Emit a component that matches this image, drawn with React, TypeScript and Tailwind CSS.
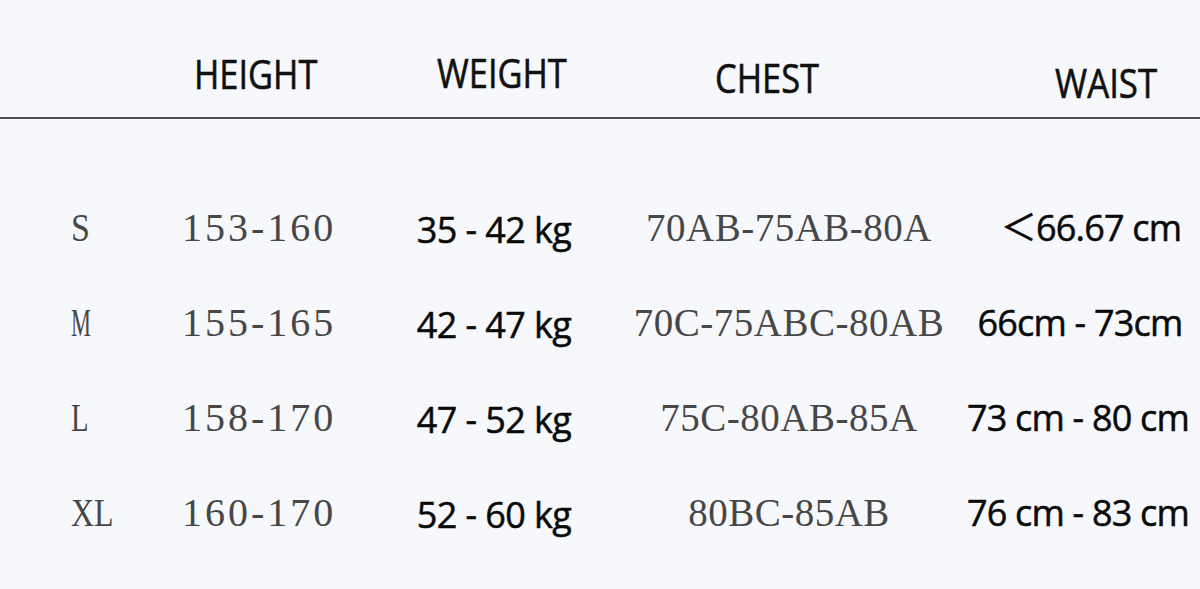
import React from "react";

const sans = { fontFamily: '"Open Sans", "Noto Sans", "Noto Sans CJK SC", sans-serif' };
const serif = { fontFamily: '"Liberation Serif", "DejaVu Serif", serif' };

const rows = [
  { size: "S", sizeCls: "scale-x-[0.85]", height: "153-160", weight: "35 - 42 kg", chest: "70AB-75AB-80A", waist: "＜66.67 cm", shift: "pl-[26px]" },
  { size: "M", sizeCls: "scale-x-[0.56]", height: "155-165", weight: "42 - 47 kg", chest: "70C-75ABC-80AB", waist: "66cm - 73cm", shift: "pl-[4px]" },
  { size: "L", sizeCls: "scale-x-[0.72]", height: "158-170", weight: "47 - 52 kg", chest: "75C-80AB-85A", waist: "73 cm - 80 cm", shift: "pl-[0px]" },
  { size: "XL", sizeCls: "scale-x-[0.8]", height: "160-170", weight: "52 - 60 kg", chest: "80BC-85AB", waist: "76 cm - 83 cm", shift: "pl-[0px]" },
];

export default function App() {
  return (
    <div className="w-[1200px] h-[589px] bg-[#f7f8fc] overflow-hidden">
      <div className="flex h-[119px] border-b-2 border-[#505050] text-[40px] leading-[40px] text-[#111] [-webkit-text-stroke:0.6px_#111]" style={sans}>
        <div className="w-[194px] shrink-0" />
        <div className="w-[243px] shrink-0 pt-[54px]">
          <span className="inline-block origin-left scale-x-[0.86]">HEIGHT</span>
        </div>
        <div className="w-[278px] shrink-0 pt-[53px]">
          <span className="inline-block origin-left scale-x-[0.86]">WEIGHT</span>
        </div>
        <div className="w-[340px] shrink-0 pt-[58px]">
          <span className="inline-block origin-left scale-x-[0.86]">CHEST</span>
        </div>
        <div className="flex-1 pt-[63px]">
          <span className="inline-block origin-left scale-x-[0.87]">WAIST</span>
        </div>
      </div>
      <div className="flex flex-col pt-[61px]">
        {rows.map((r) => (
          <div key={r.size} className="flex h-[95px] items-center">
            <div className="w-[182px] shrink-0 pl-[71px] text-[40px] leading-[48px] text-[#474747]" style={serif}>
              <span className={`inline-block origin-left ${r.sizeCls}`}>{r.size}</span>
            </div>
            <div className="w-[218px] shrink-0 text-[40px] leading-[48px] tracking-[3px] text-[#474747] whitespace-nowrap" style={serif}>
              {r.height}
            </div>
            <div className="w-[184px] shrink-0 flex justify-center text-[36px] leading-[48px] tracking-[-0.6px] text-[#0a0a0a] [-webkit-text-stroke:0.5px_#0a0a0a] whitespace-nowrap" style={sans}>
              <span className="pt-[4px] pl-[4px]">{r.weight}</span>
            </div>
            <div className="w-[402px] shrink-0 flex justify-center pl-[8px] text-[39px] leading-[48px] tracking-[0.5px] text-[#474747] whitespace-nowrap" style={serif}>
              {r.chest}
            </div>
            <div className={`w-[184px] shrink-0 flex justify-center text-[36px] leading-[48px] tracking-[-0.8px] text-[#0a0a0a] [-webkit-text-stroke:0.5px_#0a0a0a] whitespace-nowrap ${r.shift}`} style={sans}>
              {r.waist}
            </div>
          </div>
        ))}
      </div>
    </div>
  );
}
